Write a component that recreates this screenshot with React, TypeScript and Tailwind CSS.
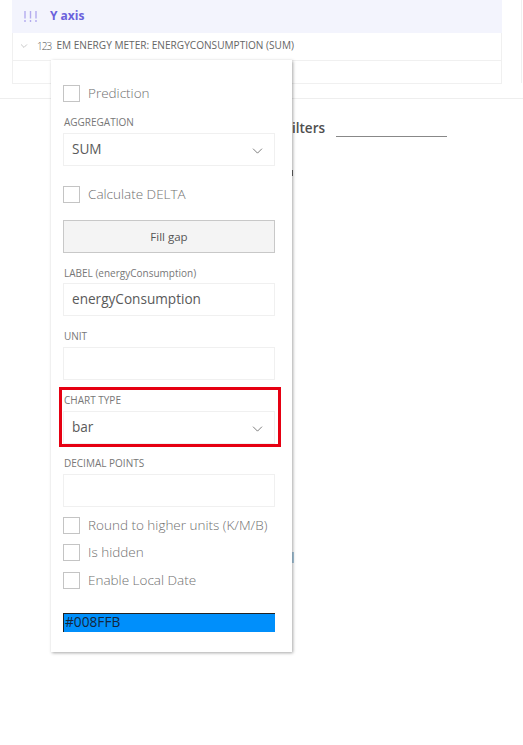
import React from "react";

const Chevron = ({ className = "" }: { className?: string }) => (
  <svg viewBox="0 0 12 7" className={className} fill="none" stroke="currentColor" strokeWidth="0.8">
    <path d="M0.8 0.8 L6 6 L11.2 0.8" />
  </svg>
);

const Check = ({ label, className = "" }: { label: string; className?: string }) => (
  <div className={`flex items-center gap-[8px] ${className}`}>
    <div className="h-[17px] w-[17px] border border-[#c4c4c4] bg-white" />
    <span className="text-[13.5px] font-light leading-[19px] text-[#707070]">{label}</span>
  </div>
);

const Label = ({ children, className = "" }: { children: React.ReactNode; className?: string }) => (
  <div className={`pl-[1px] text-[10px] leading-[12px] text-[#777777] ${className}`}>{children}</div>
);

const Field = ({ value, select }: { value?: string; select?: boolean }) => (
  <div className="flex h-[33px] w-[212px] items-center justify-between border border-[#f0f0f0] bg-white pb-[1px] pl-[8px] pr-[11px] text-[13.6px] text-[#5a5a5a]">
    <span>{value}</span>
    {select && <Chevron className="mt-[3px] h-[6px] w-[11px] text-[#444]" />}
  </div>
);

export default function App() {
  return (
    <div className="relative h-[745px] w-[523px] overflow-hidden bg-white font-['Open_Sans',sans-serif]">
      <div className="mx-[12px] w-[490px]">
        <div className="flex h-[33px] items-center bg-[#f3f4fd] pb-[1px] pl-[11px]">
          <svg viewBox="0 0 15 11" className="mr-[12px] h-[11px] w-[15px] text-[#b3abee]" fill="none" stroke="currentColor" strokeWidth="1.4">
            <path d="M2 0 V7.5 M2 9 V11 M7.5 0 V7.5 M7.5 9 V11 M13 0 V7.5 M13 9 V11" />
          </svg>
          <span className="text-[12px] font-bold text-[#6a62dc]">Y axis</span>
        </div>
        <div className="flex h-[28px] items-center border-x border-b border-[#f0f0f0] pb-[1px] pl-[7px]">
          <Chevron className="h-[4px] w-[8px] text-[#888]" />
          <span className="ml-[9px] text-[10px] font-light tracking-[-0.9px] text-[#555]">123</span>
          <span className="ml-[5px] text-[10.1px] text-[#666]">EM ENERGY METER: ENERGYCONSUMPTION (SUM)</span>
        </div>
        <div className="h-[23px] border-x border-b border-[#f0f0f0]" />
      </div>
      <div className="mt-[14px] border-t border-[#eeeeee]" />
      <div className="ml-[292px] mt-[19px] flex items-end">
        <span className="text-[13.5px] font-semibold leading-[20px] text-[#4f4f4f]">ilters</span>
        <div className="mb-[1px] ml-[11px] h-[1px] w-[111px] bg-[#888]" />
      </div>

      {/* Right neighbouring card edge */}
      <div className="absolute left-[521px] top-0 h-[83px] w-[2px] border-l border-[#f0f0f0]" />
      <div className="absolute left-[292px] top-[170px] h-[6px] w-[1px] bg-[#666]" />
      <div className="absolute left-[292px] top-[552px] h-[11px] w-[2px] bg-[#a9c9de]" />

      {/* Popover */}
      <div className="absolute left-[51px] top-[60px] h-[592px] w-[241px] bg-white pl-[12px] pt-[24px] shadow-[1px_1px_3px_rgba(0,0,0,0.35)]">
        <Check label="Prediction" />
        <Label className="mt-[13px]">AGGREGATION</Label>
        <div className="mt-[5px]"><Field value="SUM" select /></div>
        <Check label="Calculate DELTA" className="mt-[19px]" />
        <div className="mt-[16px] flex h-[33px] w-[212px] items-center justify-center border border-[#c8c8c8] bg-[#f4f4f4] text-[11.5px] text-[#555]">
          Fill gap
        </div>
        <Label className="mt-[14px]">LABEL (energyConsumption)</Label>
        <div className="mt-[4px]"><Field value="energyConsumption" /></div>
        <Label className="mt-[14px]">UNIT</Label>
        <div className="mt-[5px]"><Field /></div>
        <Label className="mt-[14px]">CHART TYPE</Label>
        <div className="mt-[5px]"><Field value="bar" select /></div>
        <Label className="mt-[13px]">DECIMAL POINTS</Label>
        <div className="mt-[5px]"><Field /></div>
        <Check label="Round to higher units (K/M/B)" className="mt-[9px]" />
        <Check label="Is hidden" className="mt-[8px]" />
        <Check label="Enable Local Date" className="mt-[9px]" />
        <div className="mt-[23px] flex h-[19px] w-[212px] items-center border-l border-t border-[#222] bg-[#008ffb] pb-[2px] pl-[1px] text-[13.7px] leading-none text-[#14263c]">
          #008FFB
        </div>
        {/* Highlight */}
        <div className="absolute left-[8px] top-[327px] h-[60px] w-[222px] border-[3px] border-[#e60012]" />
      </div>
    </div>
  );
}
